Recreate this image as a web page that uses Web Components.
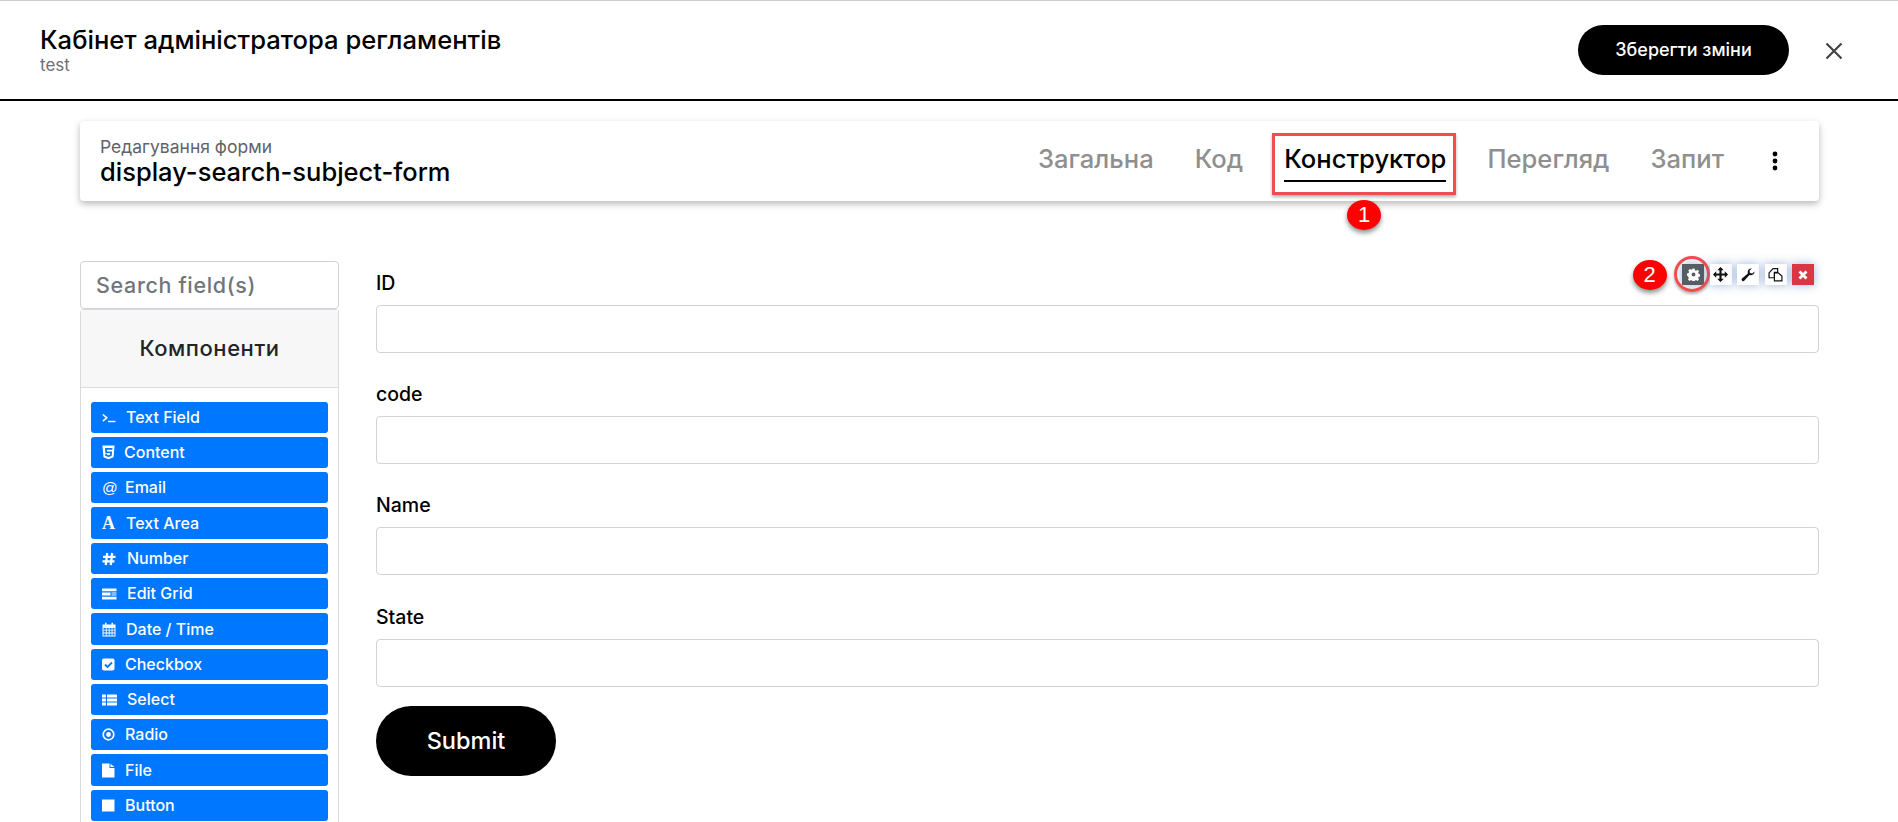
<!DOCTYPE html>
<html lang="uk">
<head>
<meta charset="utf-8">
<title>Кабінет адміністратора регламентів</title>
<style>
  html, body { margin: 0; height: 100%; overflow: hidden; background: #fff; }
  body { font-family: Inter, "Noto Sans", sans-serif; color: #000; }
</style>
</head>
<body>
<app-header title="Кабінет адміністратора регламентів" subtitle="test" action="Зберегти зміни"></app-header>
<page-main>
  <form-card label="Редагування форми" name="display-search-subject-form">
    <form-tab>Загальна</form-tab>
    <form-tab>Код</form-tab>
    <form-tab active marked>Конструктор</form-tab>
    <form-tab>Перегляд</form-tab>
    <form-tab>Запит</form-tab>
  </form-card>
  <builder-layout>
    <comp-sidebar slot="side">
      <comp-button icon="terminal" gap="10">Text Field</comp-button>
      <comp-button icon="html5" gap="9">Content</comp-button>
      <comp-button icon="at" gap="10">Email</comp-button>
      <comp-button icon="font" gap="11" tall>Text Area</comp-button>
      <comp-button icon="hash" gap="11">Number</comp-button>
      <comp-button icon="grid" gap="10">Edit Grid</comp-button>
      <comp-button icon="calendar" gap="10" tall>Date / Time</comp-button>
      <comp-button icon="check" gap="10">Checkbox</comp-button>
      <comp-button icon="list" gap="10">Select</comp-button>
      <comp-button icon="radio" gap="10">Radio</comp-button>
      <comp-button icon="file" gap="10" tall>File</comp-button>
      <comp-button icon="stop" gap="10">Button</comp-button>
    </comp-sidebar>
    <form-canvas>
      <form-field label="ID" tools></form-field>
      <form-field label="code"></form-field>
      <form-field label="Name"></form-field>
      <form-field label="State"></form-field>
      <submit-button>Submit</submit-button>
    </form-canvas>
  </builder-layout>
</page-main>

<script>
class AppHeader extends HTMLElement {
  constructor() {
    super();
    this.attachShadow({ mode: 'open' });
  }
  connectedCallback() {
    this.shadowRoot.innerHTML = `
    <style>
      :host { display: flex; align-items: center; height: 98px; box-sizing: content-box;
        border-top: 1px solid #ccc; border-bottom: 2px solid #000; padding: 0 0 0 40px; }
      .titles { flex: 1; }
      h1 { margin: 0; font: 500 25.6px/29px Inter, sans-serif; }
      p { margin: 1px 0 0; font: 400 17px/20px Inter, sans-serif; color: #6b6f76; }
      button { width: 211px; height: 50px; border: 0; border-radius: 25px; background: #000; color: #fff;
        font: 500 18px Inter, sans-serif; margin-top: -1px; }
      svg { margin: 2px 55px 0 36px; display: block; }
    </style>
    <div class="titles">
      <h1>${this.getAttribute('title')}</h1>
      <p>${this.getAttribute('subtitle')}</p>
    </div>
    <button>${this.getAttribute('action')}</button>
    <svg width="18" height="18" viewBox="0 0 18 18"><path d="M1.5 1.5l15 15M16.5 1.5l-15 15" stroke="#444" stroke-width="2.2" fill="none"/></svg>`;
  }
}

class PageMain extends HTMLElement {
  constructor() {
    super();
    this.attachShadow({ mode: 'open' }).innerHTML = `
    <style>:host { display: block; padding: 20px 79px 0 80px; }</style>
    <slot></slot>`;
  }
}

class FormCard extends HTMLElement {
  constructor() {
    super();
    this.attachShadow({ mode: 'open' });
  }
  connectedCallback() {
    this.shadowRoot.innerHTML = `
    <style>
      :host { display: flex; align-items: center; height: 80px; padding: 0 41px 0 20px; background: #fff;
        border-radius: 4px; box-shadow: 0 3px 7px rgba(0,0,0,.28); }
      .info { flex: 1; }
      .label { font: 400 17.5px/20px Inter, sans-serif; color: #5f6368; padding-top: 2px; }
      .name { font: 500 25.5px/30px Inter, sans-serif; color: #000; }
      .tabs { display: flex; gap: 41px; align-items: center; }
      svg { display: block; margin-left: 48px; }
    </style>
    <div class="info">
      <div class="label">${this.getAttribute('label')}</div>
      <div class="name">${this.getAttribute('name')}</div>
    </div>
    <div class="tabs"><slot></slot></div>
    <svg width="6" height="20" viewBox="0 0 6 20"><circle cx="3" cy="3" r="2.4"/><circle cx="3" cy="10" r="2.4"/><circle cx="3" cy="17" r="2.4"/></svg>`;
  }
}

class FormTab extends HTMLElement {
  constructor() {
    super();
    this.attachShadow({ mode: 'open' }).innerHTML = `
    <style>
      :host { display: block; position: relative; font: 500 25.6px/32px Inter, sans-serif; color: #8f8f8f; padding: 5px 0 9px; }
      :host([active]) { color: #000; }
      .bar { display: none; position: absolute; left: 0; right: 0; bottom: 2px; height: 2px; background: #000; }
      :host([active]) .bar { display: block; }
      .mark, .num { display: none; position: absolute; }
      :host([marked]) .mark, :host([marked]) .num { display: block; }
      .mark { left: -12px; right: -10px; top: -5px; height: 56px; border: 3px solid #f04e4e; box-shadow: 0 2px 3px rgba(0,0,0,.3); }
      .num { left: 63px; top: 62px; width: 34px; height: 30px; border-radius: 50%; background: #f00; color: #fff;
        font: 400 22px/30px "Liberation Sans", sans-serif; text-align: center; box-shadow: 0 3px 5px rgba(0,0,0,.45); }
    </style>
    <slot></slot>
    <span class="bar"></span>
    <span class="mark"></span>
    <span class="num">1</span>`;
  }
}

class BuilderLayout extends HTMLElement {
  constructor() {
    super();
    this.attachShadow({ mode: 'open' }).innerHTML = `
    <style>
      :host { display: grid; grid-template-columns: 259px 1fr; column-gap: 37px; margin-top: 60px; }
    </style>
    <slot name="side"></slot>
    <slot></slot>`;
  }
}

class CompSidebar extends HTMLElement {
  constructor() {
    super();
    this.attachShadow({ mode: 'open' }).innerHTML = `
    <style>
      :host { display: block; }
      .search { box-sizing: border-box; height: 48px; border: 1px solid #ced4da; border-radius: 4px;
        padding: 0 15px; font: 500 21.5px/46px Inter, sans-serif; letter-spacing: .65px; color: #70757a; }
      .panel { border: 1px solid #d9d9de; border-radius: 4px 4px 0 0; border-bottom: 0; }
      .head { height: 77px; background: #f7f7f7; border-bottom: 1px solid #dcdce0; text-align: center;
        font: 500 22px/77px Inter, sans-serif; letter-spacing: .55px; color: #212529; }
      .list { display: flex; flex-direction: column; gap: 4px; padding: 14px 10px 10px; }
    </style>
    <div class="search">Search field(s)</div>
    <div class="panel">
      <div class="head">Компоненти</div>
      <div class="list"><slot></slot></div>
    </div>`;
  }
}

const ICONS = {
  terminal: '<svg width="14" height="14" viewBox="0 0 14 14"><path d="M.8 3.500l4 3.300-4 3.300" stroke="#fff" stroke-width="1.500" fill="none"/><path d="M6 10.500h7.500" stroke="#fff" stroke-width="1.400"/></svg>',
  html5: '<svg width="13" height="15" viewBox="0 0 13 15"><path fill="#fff" fill-rule="evenodd" d="M.4.500H12.600L11.500 12.300 6.500 14.300 1.500 12.300ZM3 3H10.500L10.300 4.800H4.800L5 6.500H10.100L9.600 11 6.500 12 3.400 11 3.200 8.800H5L5.100 9.800 6.500 10.200 7.900 9.800 8.100 8H3.400Z"/></svg>',
  at: '<span class="g at">@</span>',
  font: '<span class="g a">A</span>',
  hash: '<svg width="14" height="14" viewBox="0 0 14 14"><path d="M5.200 1L3.800 13M10.200 1L8.800 13M1 4.800h12.500M.5 9.300H12.500" stroke="#fff" stroke-width="2.300" fill="none"/></svg>',
  grid: '<svg width="15" height="12" viewBox="0 0 15 12"><path fill="#fff" d="M0 .5h14.500v2.800H0zM0 4.600h8.500v2.800H0zM9.500 4.600h5v1H9.500zM9.500 6.500h5v1H9.500zM0 8.700h14.500v2.800H0z"/></svg>',
  calendar: '<svg width="14" height="15" viewBox="0 0 14 15"><path fill="#fff" fill-rule="evenodd" d="M.5 2.500H3V.8h1.500v1.700h5V.8H11v1.700h2.500v12H.5zM1.500 6v1.700h2.300V6zM4.700 6v1.700h2V6zM7.600 6v1.700h2V6zM10.500 6v1.700h2V6zM1.500 8.500v2h2.300v-2zM4.700 8.500v2h2v-2zM7.600 8.500v2h2v-2zM10.500 8.500v2h2v-2zM1.500 11.400v2h2.300v-2zM4.700 11.400v2h2v-2zM7.600 11.400v2h2v-2zM10.500 11.400v2h2v-2z"/></svg>',
  check: '<svg width="13" height="13" viewBox="0 0 13 13"><rect width="12.500" height="12" y=".5" rx="1.800" fill="#fff"/><path d="M3 6.500l2.500 2.500 4.500-4.500" stroke="#0077ff" stroke-width="1.800" fill="none"/></svg>',
  list: '<svg width="15" height="12" viewBox="0 0 15 12"><path fill="#fff" d="M0 .5h3.900v3H0zM5 .5h10v3H5zM0 4.500h3.900v3H0zM5 4.500h10v3H5zM0 8.500h3.900v3H0zM5 8.500h10v3H5z"/></svg>',
  radio: '<svg width="13" height="13" viewBox="0 0 13 13"><circle cx="6.500" cy="6.500" r="5.300" stroke="#fff" stroke-width="1.700" fill="none"/><circle cx="6.500" cy="6.500" r="2.400" fill="#fff"/></svg>',
  file: '<svg width="13" height="15" viewBox="0 0 13 15"><path fill="#fff" d="M0 .5h7.500v4.500h5v9.500H0zM8.500.8l4 3.300h-4z"/></svg>',
  stop: '<svg width="13" height="13" viewBox="0 0 13 13"><rect y=".5" width="12.500" height="12" fill="#fff"/></svg>'
};

class CompButton extends HTMLElement {
  constructor() {
    super();
    this.attachShadow({ mode: 'open' });
  }
  connectedCallback() {
    const gap = this.getAttribute('gap') || 10;
    this.shadowRoot.innerHTML = `
    <style>
      :host { display: flex; align-items: center; box-sizing: border-box; height: 31px; padding-left: 11px;
        background: #0077ff; border-radius: 3px; color: #fff; font: 500 16px/31px Inter, sans-serif; }
      :host([tall]) { height: 32px; }
      svg { display: block; flex: none; }
      .i { display: flex; align-items: center; }
      .t { margin-left: ${gap}px; }
      .g { display: block; width: 13px; text-align: center; }
      .at { font: 400 15.500px/14px "Liberation Sans", sans-serif; }
      .a { font: 700 18px/14px "Liberation Serif", serif; }
    </style>
    <span class="i">${ICONS[this.getAttribute('icon')]}</span>
    <span class="t"><slot></slot></span>`;
  }
}

class FormCanvas extends HTMLElement {
  constructor() {
    super();
    this.attachShadow({ mode: 'open' }).innerHTML = `
    <style>:host { display: block; padding-top: 10.800px; }</style>
    <slot></slot>`;
  }
}

class FormField extends HTMLElement {
  constructor() {
    super();
    this.attachShadow({ mode: 'open' });
  }
  connectedCallback() {
    const tools = this.hasAttribute('tools') ? `
      <div class="tools">
        <span class="num">2</span>
        <span class="tool dark"><svg width="13" height="13" viewBox="0 0 12 12"><path fill="#fff" fill-rule="evenodd" d="M5 .5h2l.3 1.500 1.100.5 1.300-.8 1.400 1.400-.8 1.300.5 1.100 1.500.3v2l-1.500.3-.5 1.100.8 1.300-1.400 1.400-1.300-.8-1.100.5-.3 1.500H5l-.3-1.500-1.100-.5-1.300.8-1.400-1.400.8-1.300-.5-1.100L0 7V5l1.500-.3.500-1.100-.8-1.300L2.600.9l1.300.8 1.100-.5zM6 4.200a1.800 1.800 0 100 3.600 1.800 1.800 0 000-3.600z"/></svg><i class="ring"></i></span>
        <span class="tool"><svg width="15" height="15" viewBox="0 0 14 14"><path d="M7 1v12M1 7h12" stroke="#111" stroke-width="2"/><path d="M7 0l3 3H4zM7 14l3-3H4zM0 7l3-3v6zM14 7l-3-3v6z" fill="#111"/></svg></span>
        <span class="tool"><svg width="14" height="14" viewBox="0 0 13 13"><path fill="#111" d="M12.600 3.200a3.500 3.500 0 01-4.700 3.300L3 11.900a1.500 1.500 0 01-2.100-2.100L6.400 5A3.500 3.500 0 0110 .4L7.900 2.500l.4 2.100 2.100.4z"/></svg></span>
        <span class="tool"><svg width="15" height="15" viewBox="0 0 14 14"><path d="M1 5.500L4.700 1.500H9V5H6V10H1z" fill="#fff" stroke="#111" stroke-width="1.100"/><path d="M6 5.500H9.500L13 8.500V13H6z" fill="#fff" stroke="#111" stroke-width="1.100"/></svg></span>
        <span class="tool red"><svg width="10" height="10" viewBox="0 0 10 10"><path d="M1.500 1.500l7 7M8.500 1.500l-7 7" stroke="#fff" stroke-width="2.800"/></svg></span>
      </div>` : '';
    this.shadowRoot.innerHTML = `
    <style>
      :host { display: block; position: relative; margin-bottom: 30.33px; }
      label { display: block; height: 22px; font: 500 19.5px/22px Inter, sans-serif; color: #000; margin-bottom: 11px; padding-top: 1px; margin-top: -1px; }
      .box { box-sizing: border-box; height: 48px; border: 1px solid #ced4da; border-radius: 4px; background: #fff; }
      .tools { position: absolute; top: -11px; right: 5px; display: flex; align-items: center; gap: 5.500px; }
      .tool { position: relative; display: flex; align-items: center; justify-content: center; width: 22px; height: 21px;
        background: #fff; box-shadow: 0 0 10px rgba(60,110,180,.5); }
      .dark { background: #565e64; }
      .red { background: #dc3545; }
      .ring { position: absolute; left: -8px; top: -8px; width: 36px; height: 36px; box-sizing: border-box;
        border: 3.500px solid #f04e4e; border-radius: 50%; box-shadow: 0 2px 3px rgba(0,0,0,.3); }
      .num { width: 34px; height: 30px; border-radius: 50%; background: #f00; color: #fff; margin-right: 10px;
        font: 400 22px/30px "Liberation Sans", sans-serif; text-align: center; box-shadow: 0 3px 5px rgba(0,0,0,.45); }
    </style>
    <label>${this.getAttribute('label')}</label>
    <div class="box"></div>
    ${tools}`;
  }
}

class SubmitButton extends HTMLElement {
  constructor() {
    super();
    this.attachShadow({ mode: 'open' }).innerHTML = `
    <style>
      :host { display: block; width: 180px; height: 70px; margin-top: -11px; border-radius: 35px; background: #000; color: #fff;
        text-align: center; font: 500 23.5px/70px Inter, sans-serif; }
    </style>
    <slot></slot>`;
  }
}

customElements.define('app-header', AppHeader);
customElements.define('page-main', PageMain);
customElements.define('form-card', FormCard);
customElements.define('form-tab', FormTab);
customElements.define('builder-layout', BuilderLayout);
customElements.define('comp-sidebar', CompSidebar);
customElements.define('comp-button', CompButton);
customElements.define('form-canvas', FormCanvas);
customElements.define('form-field', FormField);
customElements.define('submit-button', SubmitButton);
</script>
</body>
</html>
